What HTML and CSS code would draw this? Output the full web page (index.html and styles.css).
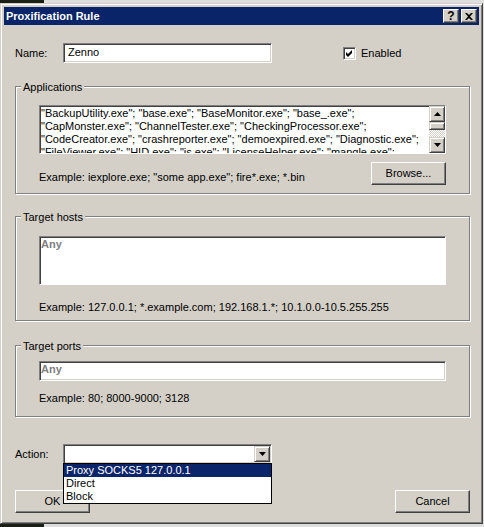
FILE: index.html
```html
<!DOCTYPE html>
<html>
<head>
<meta charset="utf-8">
<title>Proxification Rule</title>
<link rel="stylesheet" href="styles.css">
</head>
<body>
<div class="window">
  <div class="titlebar">
    <span class="title">Proxification Rule</span>
    <div class="caption-buttons">
      <span class="cap-btn help">?</span>
      <span class="cap-btn close">
        <svg width="8" height="7" viewBox="0 0 8 7"><path d="M0 0h2l2 2 2-2h2L5 3.5 8 7H6L4 5 2 7H0l3-3.5z" fill="#000"/></svg>
      </span>
    </div>
  </div>
  <div class="content">
    <div class="name-row">
      <span class="lbl">Name:</span>
      <div class="edit name-edit">Zenno</div>
      <span class="checkbox"><svg width="11" height="11" viewBox="0 0 11 11"><path d="M2 4l2 2 4-4v3l-4 4-2-2z" fill="#000"/></svg></span>
      <span class="chk-label">Enabled</span>
    </div>

    <div class="group apps">
      <span class="group-title">Applications</span>
      <div class="memo">
        <div class="memo-text">
          <div class="line">"BackupUtility.exe"; "base.exe"; "BaseMonitor.exe"; "base_.exe";</div>
          <div class="line">"CapMonster.exe"; "ChannelTester.exe"; "CheckingProcessor.exe";</div>
          <div class="line">"CodeCreator.exe"; "crashreporter.exe"; "demoexpired.exe"; "Diagnostic.exe";</div>
          <div class="line">"FileViewer.exe"; "HID.exe"; "js.exe"; "LicenseHelper.exe"; "mangle.exe";</div>
        </div>
        <div class="vscroll">
          <span class="sb-btn"><svg width="7" height="4" viewBox="0 0 7 4"><path d="M3.5 0L7 4H0z" fill="#000"/></svg></span>
          <span class="sb-thumb"></span>
          <span class="sb-track"></span>
          <span class="sb-btn"><svg width="7" height="4" viewBox="0 0 7 4"><path d="M0 0h7L3.5 4z" fill="#000"/></svg></span>
        </div>
      </div>
      <div class="example-row">
        <span class="example">Example: iexplore.exe; "some app.exe"; fire*.exe; *.bin</span>
        <span class="btn browse">Browse...</span>
      </div>
    </div>

    <div class="group hosts">
      <span class="group-title">Target hosts</span>
      <div class="memo"><div class="memo-text"><span class="hint">Any</span></div></div>
      <div class="example ex-hosts">Example: 127.0.0.1; *.example.com; 192.168.1.*; 10.1.0.0-10.5.255.255</div>
    </div>

    <div class="group ports">
      <span class="group-title">Target ports</span>
      <div class="edit port-edit"><span class="hint">Any</span></div>
      <div class="example ex-ports">Example: 80; 8000-9000; 3128</div>
    </div>

    <div class="action-row">
      <span class="lbl">Action:</span>
      <div class="combo">
        <span class="combo-value"></span>
        <span class="sb-btn combo-btn"><svg width="7" height="4" viewBox="0 0 7 4"><path d="M0 0h7L3.5 4z" fill="#000"/></svg></span>
        <div class="dropdown">
          <div class="dd-item selected">Proxy SOCKS5 127.0.0.1</div>
          <div class="dd-item">Direct</div>
          <div class="dd-item">Block</div>
        </div>
      </div>
    </div>

    <div class="button-row">
      <span class="btn">OK</span>
      <span class="btn">Cancel</span>
    </div>
  </div>
</div>
</body>
</html>
```

FILE: styles.css
```css
* { box-sizing: border-box; }

html, body {
  margin: 0;
  padding: 0;
}

body {
  width: 484px;
  height: 527px;
  overflow: hidden;
  background: linear-gradient(to right, #1b2016 44px, #dedede 44px);
  font-family: "Liberation Sans", Arial, sans-serif;
  font-size: 11px;
  line-height: 13px;
  color: #000;
}

.window {
  margin-top: 3px;
  width: 483px;
  background: #d4d0c8;
  border: 1px solid;
  border-color: #d4d0c8 #404040 #404040 #d4d0c8;
  box-shadow: inset 1px 1px 0 #fff, inset -1px -1px 0 #808080;
  padding: 3px;
}

.titlebar {
  height: 18px;
  background: #0a246a;
  display: flex;
  align-items: center;
  justify-content: space-between;
  padding: 0 2px 0 2px;
}

.title {
  color: #fff;
  font-weight: bold;
  font-size: 11px;
  line-height: 18px;
}

.caption-buttons {
  display: flex;
  gap: 2px;
}

.cap-btn {
  width: 16px;
  height: 14px;
  background: #d4d0c8;
  border: 1px solid;
  border-color: #fff #404040 #404040 #fff;
  box-shadow: inset -1px -1px 0 #808080;
  display: flex;
  align-items: center;
  justify-content: center;
}

.help {
  font-weight: bold;
  font-size: 12px;
  line-height: 12px;
  padding-bottom: 1px;
}

.close svg { margin-left: -1px; }

.content {
  padding: 0 9px 7px 11px;
}

/* Name row */
.name-row {
  margin-top: 18px;
  height: 20px;
  display: flex;
  align-items: center;
}

.lbl {
  width: 48px;
}

.edit {
  background: #fff;
  border: 1px solid;
  border-color: #808080 #fff #fff #808080;
  box-shadow: inset 1px 1px 0 #404040, inset -1px -1px 0 #d4d0c8;
  height: 20px;
}

.name-edit {
  width: 209px;
  padding: 2px 4px;
}

.checkbox {
  margin-left: 71px;
  width: 13px;
  height: 13px;
  background: #fff;
  border: 1px solid;
  border-color: #808080 #fff #fff #808080;
  box-shadow: inset 1px 1px 0 #404040, inset -1px -1px 0 #d4d0c8;
  display: flex;
}

.checkbox svg { display: block; }

.chk-label {
  margin-left: 5px;
}

/* Group boxes */
.group {
  position: relative;
  border: 1px solid #808080;
  box-shadow: 1px 1px 0 #fff, inset 1px 1px 0 #fff;
  padding-left: 23px;
  padding-right: 23px;
}

.group-title {
  position: absolute;
  top: -6px;
  left: 5px;
  padding: 0 2px;
  background: #d4d0c8;
}

.apps {
  margin-top: 23px;
  padding-top: 18px;
  padding-bottom: 8px;
}

.hosts {
  margin-top: 22px;
  padding-top: 19px;
  padding-bottom: 6px;
}

.ports {
  margin-top: 24px;
  padding-top: 15px;
  padding-bottom: 11px;
}

.memo {
  height: 49px;
  background: #fff;
  border: 1px solid;
  border-color: #808080 #fff #fff #808080;
  box-shadow: inset 1px 1px 0 #404040;
  display: flex;
}

.memo-text {
  flex: 1;
  min-width: 0;
  overflow: hidden;
  padding: 1px 0 0 1px;
}

.line {
  white-space: nowrap;
}

.hint {
  color: #808080;
  font-weight: bold;
}

.vscroll {
  width: 16px;
  display: flex;
  flex-direction: column;
}

.sb-btn {
  width: 16px;
  height: 16px;
  flex: none;
  background: #d4d0c8;
  border: 1px solid;
  border-color: #d4d0c8 #404040 #404040 #d4d0c8;
  box-shadow: inset 1px 1px 0 #fff, inset -1px -1px 0 #808080;
  display: flex;
  align-items: center;
  justify-content: center;
}

.sb-thumb {
  height: 8px;
  flex: none;
  background: #d4d0c8;
  border: 1px solid;
  border-color: #d4d0c8 #404040 #404040 #d4d0c8;
  box-shadow: inset 1px 1px 0 #fff, inset -1px -1px 0 #808080;
}

.sb-track {
  flex: 1;
  background: repeating-conic-gradient(#fff 0 25%, #d4d0c8 0 50%) 0 0 / 2px 2px;
}

.example-row {
  margin-top: 8px;
  height: 23px;
  display: flex;
  justify-content: space-between;
  align-items: flex-start;
}

.example-row .example {
  margin-top: 9px;
}

.ex-hosts { margin-top: 16px; }
.ex-ports { margin-top: 11px; }

.port-edit {
  padding: 1px 0 0 1px;
}

/* Buttons */
.btn {
  width: 75px;
  height: 23px;
  background: #d4d0c8;
  border: 1px solid;
  border-color: #fff #404040 #404040 #fff;
  box-shadow: inset -1px -1px 0 #808080;
  display: flex;
  align-items: center;
  justify-content: center;
  padding-bottom: 1px;
}

/* Action */
.action-row {
  margin-top: 27px;
  height: 20px;
  display: flex;
  align-items: center;
}

.combo {
  position: relative;
  width: 209px;
  height: 20px;
  background: #fff;
  border: 1px solid;
  border-color: #808080 #fff #fff #808080;
  box-shadow: inset 1px 1px 0 #404040, inset -1px -1px 0 #d4d0c8;
  padding: 1px;
  display: flex;
  justify-content: space-between;
}

.dropdown {
  position: absolute;
  top: 100%;
  left: -1px;
  right: -1px;
  background: #fff;
  border: 1px solid #000;
  z-index: 2;
}

.dd-item {
  height: 13px;
  padding-left: 2px;
  line-height: 13px;
  white-space: nowrap;
}

.dd-item.selected {
  background: #0a246a;
  color: #fff;
}

.button-row {
  margin-top: 26px;
  display: flex;
  justify-content: space-between;
}
```
